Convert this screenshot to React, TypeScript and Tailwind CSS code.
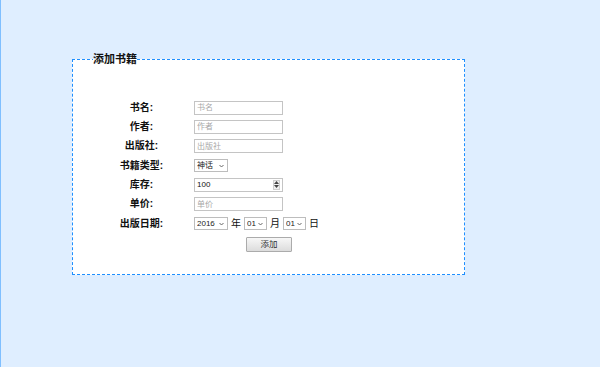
import React from "react";

const font = { fontFamily: '"Liberation Sans", "Noto Sans CJK SC", sans-serif' };

function Chevron() {
  return (
    <svg
      className="pointer-events-none absolute right-[4px] top-1/2 -translate-y-1/2"
      width="5"
      height="3"
      viewBox="0 0 5 3"
    >
      <path d="M0.5 0.5 L2.5 2.5 L4.5 0.5" fill="none" stroke="#666" strokeWidth="1" />
    </svg>
  );
}

function Select({ value, w, options }: { value: string; w: string; options: string[] }) {
  return (
    <div className={`relative h-[13px] ${w}`}>
      <select
        defaultValue={value}
        className="block h-full w-full appearance-none border border-[#bdbdbd] bg-white pl-[2px] text-[8px] leading-[11px] text-[#222] outline-none"
        style={font}
      >
        {options.map((o) => (
          <option key={o}>{o}</option>
        ))}
      </select>
      <Chevron />
    </div>
  );
}

function TextInput({ placeholder }: { placeholder: string }) {
  return (
    <input
      placeholder={placeholder}
      className="block h-[14px] w-[89px] border border-[#c4c4c4] bg-white px-[2px] text-[8px] text-[#222] outline-none placeholder:text-[#a8a8a8]"
      style={font}
    />
  );
}

function Row({ label, children }: { label: string; children: React.ReactNode }) {
  return (
    <div className="flex h-[19.33px] items-center">
      <div className="w-[97px] text-center text-[10px] font-bold leading-[12px] text-[#111]">{label}</div>
      <div className="ml-[4px] flex items-center">{children}</div>
    </div>
  );
}

export default function App() {
  return (
    <div className="h-[367px] w-full border-l border-[#7fbfff] bg-[#dfeeff] pt-[52px]" style={font}>
      <fieldset className="ml-[71px] w-[393px] border border-dashed border-[#1e8fff] bg-white pb-[22px] pl-[20px]">
        <legend className="p-0 text-[11px] font-bold leading-[15px] text-[#111]">添加书籍</legend>
        <form className="mt-[31px] flex flex-col" onSubmit={(e) => e.preventDefault()}>
          <Row label="书名:">
            <TextInput placeholder="书名" />
          </Row>
          <Row label="作者:">
            <TextInput placeholder="作者" />
          </Row>
          <Row label="出版社:">
            <TextInput placeholder="出版社" />
          </Row>
          <Row label="书籍类型:">
            <Select value="神话" w="w-[34px]" options={["神话", "小说", "历史"]} />
          </Row>
          <Row label="库存:">
            <div className="relative h-[14px] w-[89px]">
              <input
                readOnly
                value="100"
                className="block h-full w-full border border-[#c4c4c4] bg-white px-[2px] text-[8px] text-[#111] outline-none"
                style={font}
              />
              <div className="pointer-events-none absolute right-[3px] top-[2px] flex h-[10px] w-[7px] flex-col items-center justify-center gap-[1px] border border-[#cfcfcf] bg-[#efefef]">
                <svg width="5" height="3" viewBox="0 0 5 3" className="block">
                  <path d="M2.5 0 L5 3 L0 3 Z" fill="#444" />
                </svg>
                <svg width="5" height="3" viewBox="0 0 5 3" className="block">
                  <path d="M0 0 L5 0 L2.5 3 Z" fill="#444" />
                </svg>
              </div>
            </div>
          </Row>
          <Row label="单价:">
            <TextInput placeholder="单价" />
          </Row>
          <Row label="出版日期:">
            <div className="flex items-center gap-[3px] text-[10px] leading-[12px] text-[#111]">
              <Select value="2016" w="w-[34px]" options={["2016", "2015", "2014"]} />
              <span>年</span>
              <Select value="01" w="w-[23px]" options={["01", "02", "03"]} />
              <span>月</span>
              <Select value="01" w="w-[23px]" options={["01", "02", "03"]} />
              <span>日</span>
            </div>
          </Row>
          <div className="ml-[153px] mt-[4px] flex">
            <button
              type="submit"
              className="block h-[15px] w-[46px] rounded-[1px] border border-[#ababab] bg-gradient-to-b from-[#f7f7f7] to-[#dcdcdc] text-[8.5px] leading-[13px] text-[#333]"
              style={font}
            >
              添加
            </button>
          </div>
        </form>
      </fieldset>
    </div>
  );
}
